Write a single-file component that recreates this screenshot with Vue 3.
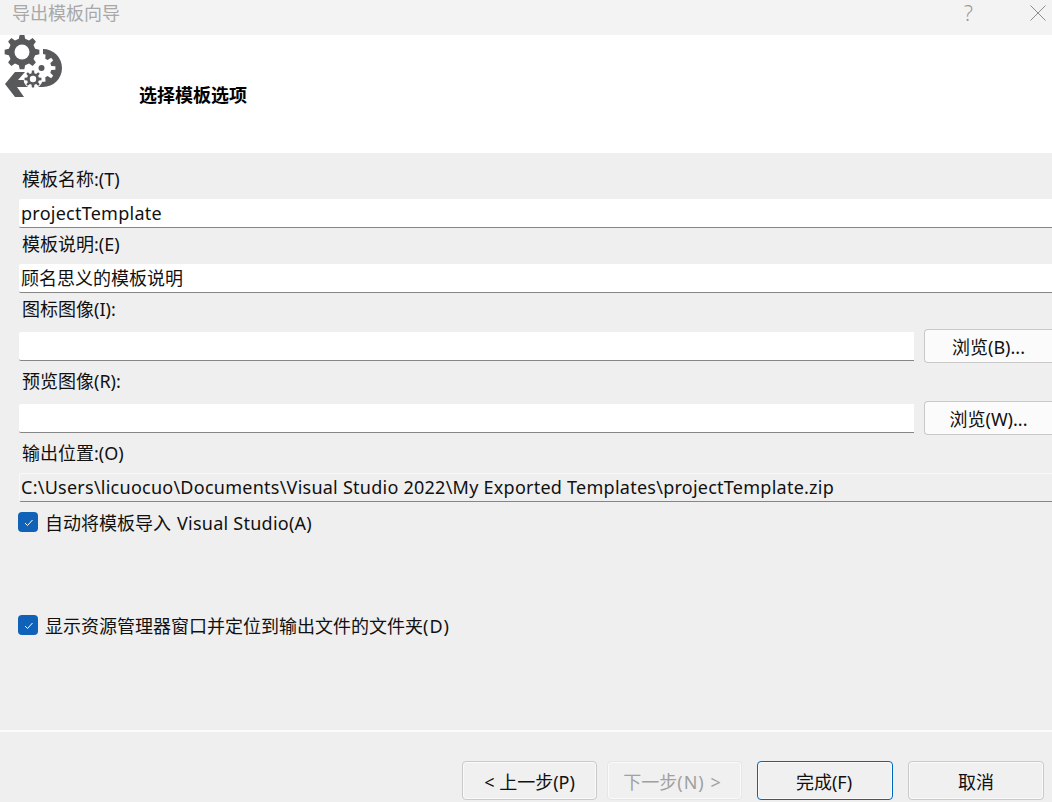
<template>
  <div class="wizard">
    <div class="titlebar">
      <span class="title">导出模板向导</span>
      <span class="help">?</span>
      <svg class="close" viewBox="0 0 16 16" width="16" height="16">
        <path d="M0.5 0.5 L15.5 15.5 M15.5 0.5 L0.5 15.5" stroke="#8c8c8c" stroke-width="1" fill="none" />
      </svg>
    </div>

    <div class="header">
      <svg class="logo" viewBox="0 0 70 70" width="70" height="70">
        <!-- arrow band, y is relative to the top of the header -->
        <path d="M43 14 A19 19 0 0 1 43 52 L17 52 L24 62 L15 62 L5 49 L15 37 L25 37 L18 45 L43 45 Z" fill="#58595b" />
        <path :d="midGear" fill="#fff" />
        <circle cx="41.500" cy="33" r="3" fill="#58595b" />
        <circle cx="33" cy="44" r="9.500" fill="#fff" />
        <path :d="smallGear" fill="#58595b" />
        <circle cx="33" cy="44" r="3.200" fill="#fff" />
        <path :d="bigGear" fill="#58595b" stroke="#fff" stroke-width="1" paint-order="stroke" />
        <circle cx="22" cy="17" r="7.500" fill="#fff" />
      </svg>
      <div class="heading">选择模板选项</div>
    </div>

    <div class="form">
      <div class="field">
        <div class="label">模板名称:(T)</div>
        <div class="input latin">projectTemplate</div>
      </div>
      <div class="field">
        <div class="label">模板说明:(E)</div>
        <div class="input">顾名思义的模板说明</div>
      </div>
      <div class="field">
        <div class="label">图标图像(I):</div>
        <div class="browse-row">
          <div class="input"></div>
          <button class="btn browse">浏览(B)...</button>
        </div>
      </div>
      <div class="field wide">
        <div class="label">预览图像(R):</div>
        <div class="browse-row">
          <div class="input"></div>
          <button class="btn browse">浏览(W)...</button>
        </div>
      </div>
      <div class="field wide">
        <div class="label">输出位置:(O)</div>
        <div class="input readonly latin">C:\Users\licuocuo\Documents\Visual Studio 2022\My Exported Templates\projectTemplate.zip</div>
      </div>

      <div class="check first">
        <span class="box">
          <svg viewBox="0 0 20 20" width="20" height="20">
            <path d="M7 11 L9.500 13.500 L14.500 8" stroke="#fff" stroke-width="1" fill="none" />
          </svg>
        </span>
        <span>自动将模板导入<span class="latin product">Visual Studio(A)</span></span>
      </div>
      <div class="check second">
        <span class="box">
          <svg viewBox="0 0 20 20" width="20" height="20">
            <path d="M7 11 L9.500 13.500 L14.500 8" stroke="#fff" stroke-width="1" fill="none" />
          </svg>
        </span>
        <span>显示资源管理器窗口并定位到输出文件的文件夹<span class="key">(D)</span></span>
      </div>
    </div>

    <div class="footer">
      <button class="btn nav prev">&lt; 上一步(P)</button>
      <button class="btn nav next" disabled>下一步<span class="key">(N) &gt;</span></button>
      <button class="btn nav finish">完成(F)</button>
      <button class="btn nav cancel">取消</button>
    </div>
  </div>
</template>

<script setup>
// teeth are drawn as a polygon going round the circle
const gear = (cx, cy, inner, outer, teeth) => {
  const pts = []
  const step = (Math.PI * 2) / teeth
  for (let i = 0; i < teeth; i++) {
    const a = i * step
    const corners = [
      [inner, a - step * 0.3],
      [outer, a - step * 0.17],
      [outer, a + step * 0.17],
      [inner, a + step * 0.3]
    ]
    for (const [r, t] of corners) {
      pts.push(`${(cx + r * Math.cos(t)).toFixed(2)} ${(cy + r * Math.sin(t)).toFixed(2)}`)
    }
  }
  return `M${pts.join(' L')} Z`
}

const bigGear = gear(22, 17, 13.5, 17.5, 8)
const midGear = gear(41.5, 33, 10, 14, 9)
const smallGear = gear(33, 44, 6, 8.5, 8)
</script>

<style>
html,
body {
  margin: 0;
  background: #efefef;
}
</style>

<style scoped>
.wizard {
  width: 1052px;
  height: 802px;
  overflow: hidden;
  display: flex;
  flex-direction: column;
  background: #efefef;
  color: #111;
  font-family: "Noto Sans", "Noto Sans CJK SC", sans-serif;
  font-size: 18px;
}

.titlebar {
  height: 35px;
  flex: none;
  display: flex;
  align-items: flex-start;
  background: #f3f3f3;
  color: #a8a8a8;
  line-height: 26px;
}

.title {
  margin-left: 12px;
  flex: 1;
}

.help {
  margin-right: 57px;
  font-size: 21px;
  font-weight: 300;
  color: #999;
}

.close {
  margin: 5px 6px 0 0;
}

.header {
  height: 118px;
  flex: none;
  display: flex;
  align-items: flex-start;
  background: #fff;
}

.logo {
  flex: none;
}

.heading {
  margin: 48px 0 0 69px;
  font-weight: 700;
  line-height: 24px;
  color: #000;
}

.form {
  flex: 1;
  padding: 10px 0 0 19px;
}

.field {
  padding-top: 4px;
}

.field.wide {
  padding-top: 6px;
}

.label {
  margin: 0 0 8px 3px;
  line-height: 24px;
}

.input {
  box-sizing: border-box;
  height: 29px;
  flex: 1;
  padding-left: 2px;
  line-height: 28px;
  background: #fff;
  border-bottom: 1px solid #868686;
  border-radius: 2px 0 0 2px;
  white-space: nowrap;
}

.input.readonly {
  background: #efefef;
  border-top: 1px solid #f8f8f8;
  border-left: 1px solid #f8f8f8;
  padding-left: 1px;
  line-height: 27px;
}

.latin {
  letter-spacing: 0.25px;
}

.product {
  margin-left: 6px;
}

.key {
  letter-spacing: 1px;
}

.browse-row {
  display: flex;
  align-items: center;
  height: 34px;
}

.btn {
  font: inherit;
  color: #111;
  padding: 0;
  box-sizing: border-box;
  background: #f0f0f0;
  border: 1px solid #c9c9c9;
  border-radius: 4px;
  box-shadow: inset 0 0 0 1px #fafafa;
}

.browse {
  flex: none;
  width: 128px;
  height: 34px;
  margin-left: 10px;
  background: #fbfbfb;
  border-right: none;
  border-radius: 4px 0 0 4px;
  box-shadow: none;
}

.check {
  display: flex;
  align-items: center;
  height: 24px;
  gap: 7px;
  margin-left: -1px;
}

.check.first {
  margin-top: 8px;
}

.check.second {
  margin-top: 79px;
}

.box {
  flex: none;
  width: 20px;
  height: 20px;
  background: #0f62b8;
  border-radius: 4px;
}

.box svg {
  display: block;
}

.footer {
  box-sizing: border-box;
  height: 72px;
  flex: none;
  display: flex;
  align-items: flex-start;
  padding: 29px 8px 0 462px;
  border-top: 2px solid #fbfbfb;
}

.nav {
  height: 39px;
  width: 135px;
  padding-top: 1px;
}

.next {
  margin-left: 10px;
  padding-right: 4px;
  color: #a0a0a0;
  border-color: #e6e6e6;
}

.finish {
  margin-left: 15px;
  padding-right: 2px;
  width: 136px;
  border-color: #0067c0;
}

.cancel {
  margin-left: 15px;
  width: 136px;
}
</style>
